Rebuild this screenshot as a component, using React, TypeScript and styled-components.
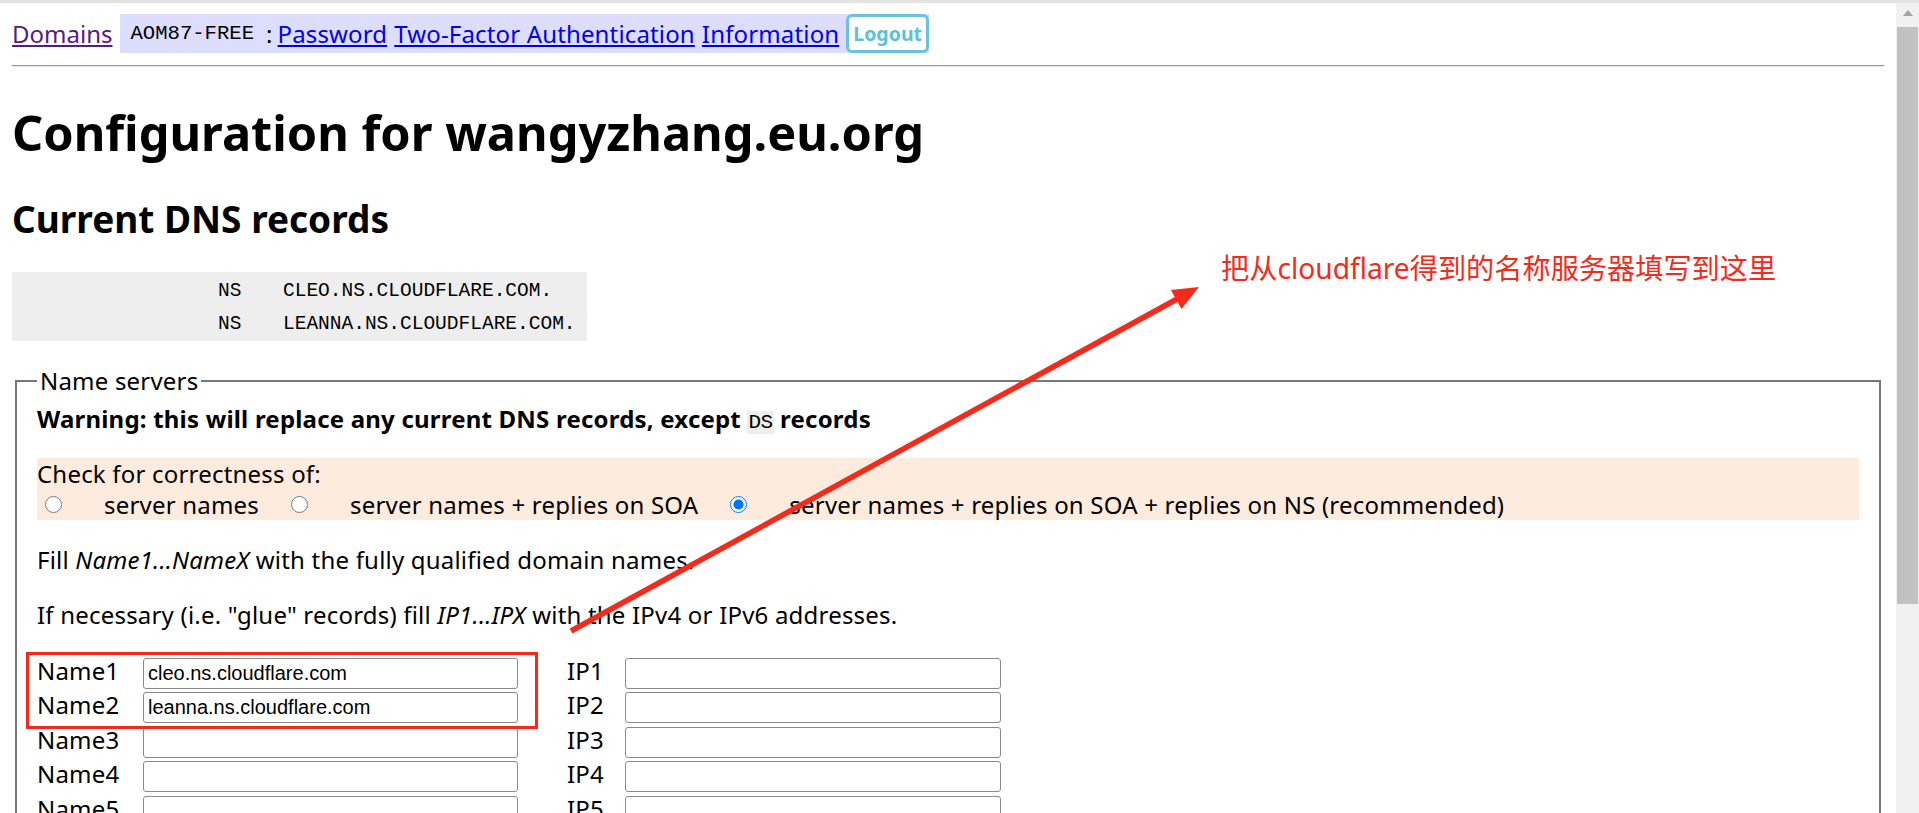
import React from "react";
import styled, { createGlobalStyle } from "styled-components";

const GlobalStyle = createGlobalStyle`
  html, body { margin: 0; padding: 0; height: 100%; overflow: hidden; background: #fff; }
  body {
    font-family: "Noto Sans", "Noto Sans CJK SC", sans-serif;
    font-size: 24px;
    line-height: 31px;
    letter-spacing: 0.2px;
    color: #000;
  }
  #root { height: 100%; }
`;

const RED = "#f62a1b";

const Page = styled.div`
  position: relative;
  display: flex;
  flex-direction: column;
  height: 100vh;
  overflow: hidden;
`;

const WindowEdge = styled.div`
  flex: none;
  height: 3px;
  background: #e3e3e3;
`;

const Viewport = styled.div`
  flex: 1;
  min-height: 0;
  display: flex;
`;

const Main = styled.main`
  flex: 1;
  min-width: 0;
  padding: 0 12px;
  overflow: hidden;
`;

const Scrollbar = styled.div`
  flex: none;
  width: 23px;
  background: #f1f1f1;
  display: flex;
  flex-direction: column;
`;

const ScrollArrow = styled.div`
  height: 24px;
  display: flex;
  align-items: center;
  justify-content: center;
  &::before {
    content: "";
    margin-top: -4px;
    border-left: 5.5px solid transparent;
    border-right: 5.5px solid transparent;
    border-bottom: 6px solid #a3a3a3;
  }
`;

const ScrollThumb = styled.div`
  height: 577px;
  margin: 0 1px;
  background: #c1c1c1;
`;

const Nav = styled.nav`
  margin-top: 11px;
  display: flex;
  align-items: center;
  gap: 8px;
  letter-spacing: 0;
`;

const DomainsLink = styled.a`
  color: #551a8b;
  text-decoration: underline;
`;

const AccountBar = styled.div`
  display: flex;
  align-items: center;
  gap: 7px;
  height: 39px;
  padding-left: 10px;
  background: #ddddff;
`;

const Handle = styled.span`
  font-family: "Liberation Mono", monospace;
  font-size: 20.6px;
`;

const Colon = styled.span`
  margin-left: 5px;
  margin-right: -2px;
`;

const NavLink = styled.a`
  color: #0000ee;
  text-decoration: underline;
  letter-spacing: 0.15px;
`;

const LogoutButton = styled.button`
  box-sizing: border-box;
  height: 39px;
  padding: 0 4px;
  border: 3px solid #6cc1e1;
  border-radius: 6px;
  background: #fff;
  color: #5bc0de;
  font-family: "Noto Sans", sans-serif;
  font-size: 19.5px;
  font-weight: 700;
  line-height: 1;
`;

const Rule = styled.hr`
  margin: 12px 0 0;
  height: 0;
  border: none;
  border-top: 1px solid #9a9a9a;
  border-bottom: 1px solid #e6e6e6;
`;

const Title = styled.h1`
  margin: 34.4px 0 0;
  font-size: 48.7px;
  line-height: 62px;
  font-weight: 700;
  letter-spacing: 0;
`;

const SubTitle = styled.h2`
  margin: 32.2px 0 0;
  font-size: 37px;
  line-height: 46.8px;
  font-weight: 700;
  letter-spacing: 0;
`;

const RecordTable = styled.div`
  margin-top: 29.6px;
  box-sizing: border-box;
  width: 575px;
  height: 69px;
  padding-top: 3px;
  background: #eeeeee;
  display: grid;
  grid-template-columns: 206px 65px 1fr;
  font-family: "Liberation Mono", monospace;
  font-size: 19.5px;
  line-height: 33.5px;
  letter-spacing: 0;
  white-space: pre;
`;

const Fieldset = styled.fieldset`
  margin: 24.5px 3px 0;
  padding: 7px 20px 15px;
  border: 2px solid #777;
  min-width: 0;
`;

const Legend = styled.legend`
  padding: 0 3px;
  font-size: 24px;
  line-height: 31px;
`;

const Warning = styled.p`
  margin: 0;
  font-weight: 700;
`;

const Code = styled.code`
  font-family: "Liberation Mono", monospace;
  font-size: 21px;
  font-weight: 400;
  letter-spacing: -0.5px;
  background: #eeeeee;
  padding: 0 1px;
`;

const CheckPanel = styled.div`
  margin-top: 19.8px;
  background: #fdecdd;
`;

const RadioRow = styled.div`
  display: flex;
  align-items: center;
`;

const Option = styled.label`
  display: flex;
  align-items: center;
  margin-right: 24px;
  white-space: nowrap;
`;

const Radio = styled.input`
  width: 17px;
  height: 17px;
  margin: 0 42.5px 0 7.5px;
`;

const Para = styled.p`
  margin: 24px 0 0;
`;

const ServerGrid = styled.div`
  margin-top: 27.5px;
  display: grid;
  grid-template-columns: 106px 375px 107px 376px;
  row-gap: 3.5px;
  align-items: baseline;
`;

const FieldLabel = styled.label<{ $indent?: boolean }>`
  line-height: 24px;
  padding-left: ${(p) => (p.$indent ? "49px" : "0")};
`;

const TextInput = styled.input`
  box-sizing: border-box;
  width: 100%;
  height: 31px;
  padding: 0 4px;
  border: 1px solid #8a8a8a;
  border-radius: 3px;
  background: #fff;
  color: #000;
  font-family: "Liberation Sans", Arial, sans-serif;
  font-size: 20px;
  letter-spacing: 0;
`;

const HighlightBox = styled.div`
  position: absolute;
  left: 26px;
  top: 652px;
  width: 512px;
  height: 77px;
  box-sizing: border-box;
  border: 3px solid ${RED};
  pointer-events: none;
`;

const ArrowSvg = styled.svg`
  position: absolute;
  left: 560px;
  top: 275px;
  pointer-events: none;
`;

const Note = styled.div`
  position: absolute;
  left: 1221px;
  top: 254px;
  font-family: "Noto Sans", "Noto Sans CJK SC", sans-serif;
  font-size: 28.2px;
  line-height: 28px;
  letter-spacing: 0;
  color: ${RED};
  white-space: nowrap;
`;

const records = [
  { type: "NS", value: "CLEO.NS.CLOUDFLARE.COM." },
  { type: "NS", value: "LEANNA.NS.CLOUDFLARE.COM." },
];

const servers = [
  "cleo.ns.cloudflare.com",
  "leanna.ns.cloudflare.com",
  "",
  "",
  "",
  "",
];

export default function App() {
  return (
    <>
      <GlobalStyle />
      <Page>
        <WindowEdge />
        <Viewport>
          <Main>
            <Nav>
              <DomainsLink href="#">Domains</DomainsLink>
              <AccountBar>
                <Handle>AOM87-FREE</Handle>
                <Colon>:</Colon>
                <NavLink href="#">Password</NavLink>
                <NavLink href="#">Two-Factor Authentication</NavLink>
                <NavLink href="#">Information</NavLink>
                <LogoutButton>Logout</LogoutButton>
              </AccountBar>
            </Nav>
            <Rule />
            <Title>Configuration for wangyzhang.eu.org</Title>
            <SubTitle>Current DNS records</SubTitle>
            <RecordTable>
              {records.map((r, i) => (
                <React.Fragment key={i}>
                  <span />
                  <span>{r.type}</span>
                  <span>{r.value}</span>
                </React.Fragment>
              ))}
            </RecordTable>
            <Fieldset>
              <Legend>Name servers</Legend>
              <Warning>
                Warning: this will replace any current DNS records, except <Code>DS</Code> records
              </Warning>
              <CheckPanel>
                <div>Check for correctness of:</div>
                <RadioRow>
                  <Option>
                    <Radio type="radio" name="check" />
                    server names
                  </Option>
                  <Option>
                    <Radio type="radio" name="check" />
                    server names + replies on SOA
                  </Option>
                  <Option>
                    <Radio type="radio" name="check" defaultChecked />
                    server names + replies on SOA + replies on NS (recommended)
                  </Option>
                </RadioRow>
              </CheckPanel>
              <Para>
                Fill <i>Name1...NameX</i> with the fully qualified domain names.
              </Para>
              <Para>
                If necessary (i.e. "glue" records) fill <i>IP1...IPX</i> with the IPv4 or IPv6 addresses.
              </Para>
              <ServerGrid>
                {servers.map((s, i) => (
                  <React.Fragment key={i}>
                    <FieldLabel>Name{i + 1}</FieldLabel>
                    <TextInput defaultValue={s} />
                    <FieldLabel $indent>IP{i + 1}</FieldLabel>
                    <TextInput defaultValue="" />
                  </React.Fragment>
                ))}
              </ServerGrid>
            </Fieldset>
          </Main>
          <Scrollbar>
            <ScrollArrow />
            <ScrollThumb />
          </Scrollbar>
        </Viewport>
        <HighlightBox />
        <ArrowSvg width="650" height="370" viewBox="0 0 650 370">
          <line x1="11" y1="356" x2="618" y2="23.5" stroke={RED} strokeWidth="5.5" />
          <polygon points="639,12 621.5,34.1 610.9,14.9" fill={RED} />
        </ArrowSvg>
        <Note>把从cloudflare得到的名称服务器填写到这里</Note>
      </Page>
    </>
  );
}
